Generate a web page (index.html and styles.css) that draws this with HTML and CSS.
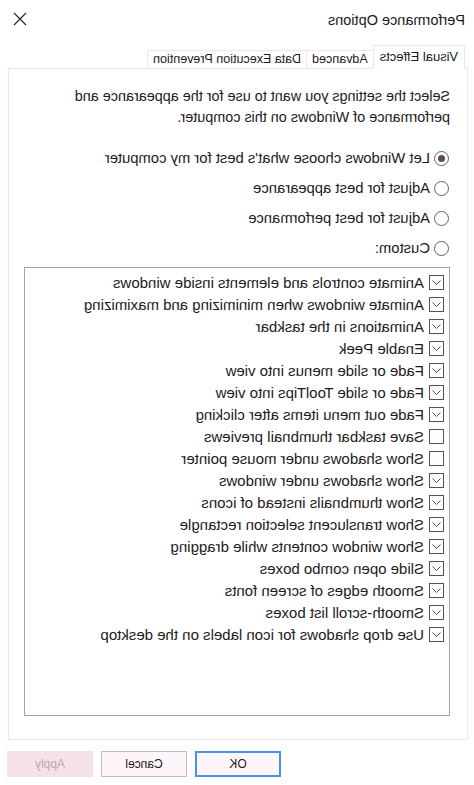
FILE: index.html
```html
<!DOCTYPE html>
<html lang="en">
<head>
<meta charset="utf-8">
<title>Performance Options</title>
<link rel="stylesheet" href="styles.css">
</head>
<body>
<div class="mirror">
  <div class="dialog">
    <header class="titlebar">
      <span class="title">Performance Options</span>
      <svg class="close" width="14" height="14" viewBox="0 0 14 14"><path d="M1 1 L13 13 M13 1 L1 13" stroke="#2a1e28" stroke-width="1.1" fill="none"/></svg>
    </header>
    <nav class="tabs">
      <span class="tab active">Visual Effects</span>
      <span class="tab">Advanced</span>
      <span class="tab">Data Execution Prevention</span>
    </nav>
    <section class="panel">
      <p class="desc">Select the settings you want to use for the appearance and performance of Windows on this computer.</p>
      <div class="radios">
        <div class="radio-row"><span class="radio checked"></span><span>Let Windows choose what's best for my computer</span></div>
        <div class="radio-row"><span class="radio"></span><span>Adjust for best appearance</span></div>
        <div class="radio-row"><span class="radio"></span><span>Adjust for best performance</span></div>
        <div class="radio-row"><span class="radio"></span><span>Custom:</span></div>
      </div>
      <div class="listbox">
        <div class="item"><span class="cb on"></span>Animate controls and elements inside windows</div>
        <div class="item"><span class="cb on"></span>Animate windows when minimizing and maximizing</div>
        <div class="item"><span class="cb on"></span>Animations in the taskbar</div>
        <div class="item"><span class="cb on"></span>Enable Peek</div>
        <div class="item"><span class="cb on"></span>Fade or slide menus into view</div>
        <div class="item"><span class="cb on"></span>Fade or slide ToolTips into view</div>
        <div class="item"><span class="cb on"></span>Fade out menu items after clicking</div>
        <div class="item"><span class="cb"></span>Save taskbar thumbnail previews</div>
        <div class="item"><span class="cb"></span>Show shadows under mouse pointer</div>
        <div class="item"><span class="cb on"></span>Show shadows under windows</div>
        <div class="item"><span class="cb on"></span>Show thumbnails instead of icons</div>
        <div class="item"><span class="cb on"></span>Show translucent selection rectangle</div>
        <div class="item"><span class="cb on"></span>Show window contents while dragging</div>
        <div class="item"><span class="cb on"></span>Slide open combo boxes</div>
        <div class="item"><span class="cb on"></span>Smooth edges of screen fonts</div>
        <div class="item"><span class="cb on"></span>Smooth-scroll list boxes</div>
        <div class="item"><span class="cb on"></span>Use drop shadows for icon labels on the desktop</div>
      </div>
    </section>
    <footer class="buttons">
      <button class="btn ok">OK</button>
      <button class="btn">Cancel</button>
      <button class="btn disabled">Apply</button>
    </footer>
  </div>
</div>
</body>
</html>
```

FILE: styles.css
```css
html, body {
  margin: 0;
  padding: 0;
  background: #ffffff;
}

.mirror {
  width: 474px;
  height: 785px;
  transform: scaleX(-1);
  overflow: hidden;
}

.dialog {
  width: 474px;
  height: 785px;
  box-sizing: border-box;
  font-family: "Liberation Sans", Arial, sans-serif;
  font-size: 14px;
  color: #241a22;
  display: flex;
  flex-direction: column;
}

.titlebar {
  height: 38px;
  flex: none;
  display: flex;
  align-items: center;
  justify-content: space-between;
  padding: 0 13px 0 9px;
}

.title {
  font-size: 14.5px;
  margin-top: 1px;
}

.close {
  display: block;
  margin-top: -1px;
}

.tabs {
  display: flex;
  align-items: flex-end;
  flex: none;
  height: 24px;
  padding-left: 9px;
  margin-top: 7px;
  margin-bottom: -1px;
  position: relative;
  z-index: 1;
}

.tab {
  box-sizing: border-box;
  height: 18px;
  line-height: 16px;
  padding: 0 5px;
  margin-bottom: 1px;
  border: 1px solid #f7e2ec;
  border-bottom: none;
  border-left: none;
  background: #fff;
  font-size: 12.5px;
}

.tab.active {
  height: 24px;
  line-height: 21px;
  padding: 0 6px 0 6px;
  margin-bottom: 0;
  border-left: 1px solid #f7e2ec;
  border-bottom: 1px solid #fff;
  font-size: 13px;
}

.panel {
  flex: none;
  margin: 0 8px 0 6px;
  height: 672px;
  box-sizing: border-box;
  border: 1px solid #f7e2ec;
  padding: 17px 16px 0 17px;
}

.desc {
  margin: 0;
  line-height: 21px;
  width: 410px;
  font-size: 14.4px;
}

.radios {
  margin-top: 15px;
  display: flex;
  flex-direction: column;
  font-size: 14.8px;
}

.radio-row {
  height: 30px;
  display: flex;
  align-items: center;
  gap: 4px;
  padding-left: 1px;
}

.radio {
  width: 13px;
  height: 13px;
  border: 1px solid #6b5c64;
  border-radius: 50%;
  box-sizing: content-box;
  position: relative;
  flex: none;
}

.radio.checked::after {
  content: "";
  position: absolute;
  left: 3px;
  top: 3px;
  width: 7px;
  height: 7px;
  border-radius: 50%;
  background: #5e4c56;
}

.listbox {
  margin-top: 4px;
  width: 426px;
  height: 449px;
  box-sizing: border-box;
  border: 1px solid #aaa1a7;
  padding: 3px 5px;
}

.item {
  height: 22px;
  display: flex;
  align-items: center;
  gap: 5px;
  font-size: 15px;
  white-space: nowrap;
}

.cb {
  width: 13px;
  height: 13px;
  border: 1px solid #5e4c56;
  flex: none;
  position: relative;
}

.cb.on::after {
  content: "";
  position: absolute;
  left: 2px;
  top: 1px;
  width: 9px;
  height: 9px;
  background: no-repeat center / 9px 9px url("data:image/svg+xml,%3Csvg xmlns='http://www.w3.org/2000/svg' width='9' height='9' viewBox='0 0 9 9'%3E%3Cpolyline points='0.5,3.5 4.5,7.5 8.5,3.5' fill='none' stroke='%235e4c56' stroke-width='1'/%3E%3C/svg%3E");
}

.buttons {
  flex: none;
  display: flex;
  gap: 8px;
  padding: 11px 0 0 193px;
}

.btn {
  width: 86px;
  height: 26px;
  box-sizing: border-box;
  border: 1px solid #cdb8c2;
  background: #fdf5fa;
  font-family: "Liberation Sans", Arial, sans-serif;
  font-size: 12px;
  color: #241a22;
  padding: 0;
}

.btn.ok {
  border: 2px solid #4a93e3;
}

.btn.disabled {
  background: #f6e1e8;
  border-color: #f6e1e8;
  color: #b9a9b1;
}
```
